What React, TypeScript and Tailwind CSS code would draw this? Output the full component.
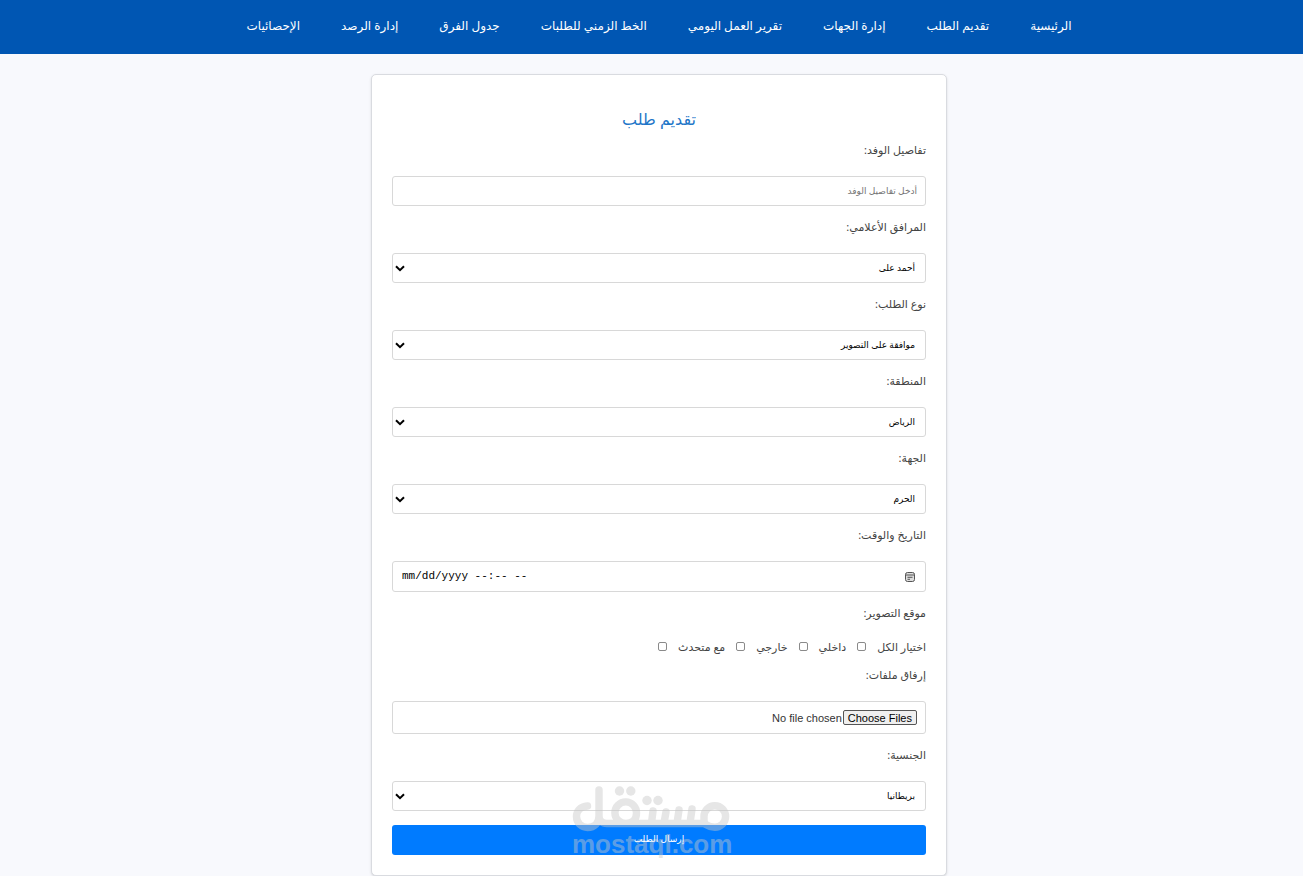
import React from "react";

const navItems = [
  "الرئيسية",
  "تقديم الطلب",
  "إدارة الجهات",
  "تقرير العمل اليومي",
  "الخط الزمني للطلبات",
  "جدول الفرق",
  "إدارة الرصد",
  "الإحصائيات",
];

const locations = ["اختيار الكل", "داخلي", "خارجي", "مع متحدث"];

const labelClass = "mb-4 block text-[11px] leading-5 text-[#444]";

function SelectField({ id, label, options }: { id: string; label: string; options: string[] }) {
  return (
    <div>
      <label htmlFor={id} className={labelClass}>
        {label}
      </label>
      <div className="relative">
        <select
          id={id}
          className="block h-[30px] w-full appearance-none rounded-[3px] border border-[#d8d8d8] bg-white pr-2.5 pl-6 text-[9px] text-black"
        >
          {options.map((option) => (
            <option key={option}>{option}</option>
          ))}
        </select>
        <svg
          viewBox="0 0 10 7"
          className="pointer-events-none absolute top-3 left-[3px] h-[7px] w-2.5"
          fill="none"
          stroke="#000"
          strokeWidth="2"
        >
          <path d="M1 1.2 5 5.2 9 1.2" />
        </svg>
      </div>
    </div>
  );
}

function Watermark() {
  return (
    <div
      dir="ltr"
      aria-hidden="true"
      className="pointer-events-none absolute bottom-[19px] left-[200px] w-[158px] text-[#c8c8c8] opacity-45"
    >
      <svg
        viewBox="0 0 158 46"
        className="block h-[46px] w-full"
        fill="none"
        stroke="currentColor"
        strokeWidth="7.4"
        strokeLinecap="round"
        strokeLinejoin="round"
      >
        <path d="M15.500 20C8 20.500 4.500 25.500 4.500 30.500C4.500 37 9.500 41.500 15.500 41.500C22.500 41.500 27 37 27 30V4M27 30C27 35 30 37.500 35 37.500H133M54 37.500A10.800 10.800 0 1 1 64.500 27C64.500 33 61 37.500 54 37.500M81 25L79.500 37M94 26L92 37M107 24L105 37M120 23L118 37M132 30.500A10.800 10.800 0 1 1 142.800 41.300C137 41.300 134 38.500 132 37.500V30.500" />
        <g fill="currentColor" stroke="none">
          <circle cx="47.500" cy="5" r="4.700" />
          <circle cx="58.800" cy="5" r="4.700" />
          <circle cx="75" cy="14.500" r="4.700" />
          <circle cx="86" cy="14.500" r="4.700" />
        </g>
      </svg>
      <div className="font-['Liberation_Sans',sans-serif] text-[26px] leading-6 font-bold">mostaql.com</div>
    </div>
  );
}

export default function App() {
  return (
    <div dir="rtl" className="min-h-screen bg-[#f8f9fd] font-['Noto_Sans','DejaVu_Sans',sans-serif]">
      <header className="bg-[#0056b3] pl-[15px]">
        <nav className="flex h-[54px] items-center justify-center gap-[41px] pb-0.5">
          {navItems.map((item) => (
            <a key={item} href="#" className="text-[12px] leading-5 whitespace-nowrap text-white">
              {item}
            </a>
          ))}
        </nav>
      </header>
      <main className="pt-5 pl-[15px]">
        <form className="relative mx-auto max-w-[576px] rounded-[5px] border border-[#d9dbe0] bg-white p-5 shadow-sm">
          <h1 className="mt-3 mb-[9px] text-center text-[16px] leading-6 text-[#1f76c8]">تقديم طلب</h1>
          <div className="flex flex-col gap-[11px]">
            <div>
              <label htmlFor="details" className={labelClass}>
                تفاصيل الوفد:
              </label>
              <input
                id="details"
                type="text"
                placeholder="أدخل تفاصيل الوفد"
                className="block h-[30px] w-full rounded-[3px] border border-[#d8d8d8] bg-white px-2 pb-0.5 text-[9px] placeholder:text-[#757575]"
              />
            </div>
            <SelectField id="companion" label="المرافق الأعلامي:" options={["أحمد على"]} />
            <SelectField id="kind" label="نوع الطلب:" options={["موافقة على التصوير"]} />
            <SelectField id="region" label="المنطقة:" options={["الرياض"]} />
            <SelectField id="party" label="الجهة:" options={["الحرم"]} />
            <div>
              <label htmlFor="date" className={labelClass}>
                التاريخ والوقت:
              </label>
              <div
                dir="ltr"
                className="flex h-[31px] items-center rounded-[3px] border border-[#d8d8d8] bg-white pr-2.5 pl-[9px]"
              >
                <input
                  id="date"
                  type="text"
                  placeholder="mm/dd/yyyy --:-- --"
                  className="min-w-0 flex-1 bg-transparent font-['Liberation_Mono',monospace] text-[11px] text-black outline-none placeholder:text-black"
                />
                <button type="button" aria-label="التاريخ والوقت" className="block">
                  <svg viewBox="0 0 10 10" className="block size-2.5" fill="none" stroke="#555">
                    <rect x="0.500" y="0.500" width="9" height="9" rx="2" fill="#ddd" />
                    <path d="M0.500 3H9.500M2.500 5.300H7.500M2.500 7.300H5" />
                  </svg>
                </button>
              </div>
            </div>
            <fieldset>
              <legend className={labelClass}>موقع التصوير:</legend>
              <div className="flex h-[15px] items-center gap-[11px]">
                {locations.map((place) => (
                  <label key={place} className="flex items-center gap-[11px] text-[11px] leading-4 text-[#444]">
                    {place}
                    <input
                      type="checkbox"
                      className="size-[9px] appearance-none rounded-[2px] border border-[#8a8a8a] bg-white checked:bg-[#007bff]"
                    />
                  </label>
                ))}
              </div>
            </fieldset>
            <div>
              <label htmlFor="files" className={labelClass}>
                إرفاق ملفات:
              </label>
              <input
                id="files"
                type="file"
                multiple
                className="block h-[33px] w-full rounded-[3px] border border-[#d8d8d8] bg-white p-2 font-['Liberation_Sans',sans-serif] text-[11px] leading-[15px] text-[#333] file:m-0 file:ml-px file:h-[15px] file:rounded-xs file:border file:border-[#555] file:bg-[#efefef] file:px-1 file:leading-3 file:text-black"
              />
            </div>
            <SelectField id="nationality" label="الجنسية:" options={["بريطانيا"]} />
          </div>
          <button
            type="submit"
            className="mt-3.5 block h-[30px] w-full rounded-[3px] bg-[#007bff] pb-0.5 text-[9px] text-white"
          >
            <span className="relative z-10">إرسال الطلب</span>
          </button>
          <Watermark />
        </form>
      </main>
    </div>
  );
}
